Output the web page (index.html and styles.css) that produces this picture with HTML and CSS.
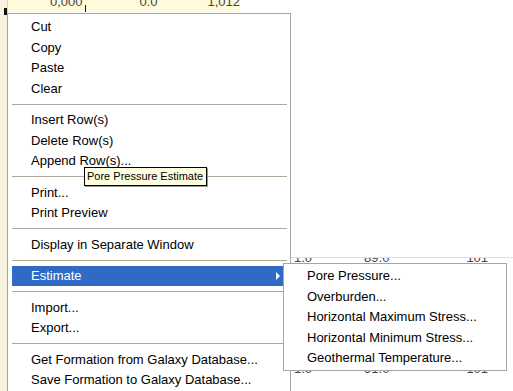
FILE: index.html
```html
<!DOCTYPE html>
<html lang="en">
<head>
  <meta charset="UTF-8" />
  <title>Context Menu</title>
  <link rel="stylesheet" href="styles.css">
</head>
<body>
  <div class="screen">
    <div class="gutter"><span class="mark"></span></div>

    <div class="sheet">
      <div class="toprow">
        <span class="cell t1">0,000</span>
        <span class="caret"></span>
        <span class="cell t2">0.0</span>
        <span class="cell t3">1,012</span>
      </div>
      <div class="gridrow r1">
        <span class="cell g1">1.0</span>
        <span class="cell g2">89.0</span>
        <span class="cell g3">101</span>
      </div>
      <div class="gridrow r2">
        <span class="cell g1">1.0</span>
        <span class="cell g2">91.0</span>
        <span class="cell g3">101</span>
      </div>
    </div>

    <div class="menu main-menu">
      <div class="item">Cut</div>
      <div class="item">Copy</div>
      <div class="item">Paste</div>
      <div class="item">Clear</div>
      <div class="sep"></div>
      <div class="item">Insert Row(s)</div>
      <div class="item">Delete Row(s)</div>
      <div class="item">Append Row(s)...</div>
      <div class="sep"></div>
      <div class="item">Print...</div>
      <div class="item">Print Preview</div>
      <div class="sep"></div>
      <div class="item">Display in Separate Window</div>
      <div class="sep"></div>
      <div class="item active">Estimate<span class="arrow"></span></div>
      <div class="sep"></div>
      <div class="item">Import...</div>
      <div class="item">Export...</div>
      <div class="sep"></div>
      <div class="item">Get Formation from Galaxy Database...</div>
      <div class="item">Save Formation to Galaxy Database...</div>
    </div>

    <div class="menu sub-menu">
      <div class="item">Pore Pressure...</div>
      <div class="item">Overburden...</div>
      <div class="item">Horizontal Maximum Stress...</div>
      <div class="item">Horizontal Minimum Stress...</div>
      <div class="item">Geothermal Temperature...</div>
    </div>

    <div class="tooltip">Pore Pressure Estimate</div>
  </div>
</body>
</html>
```

FILE: styles.css
```css
body {
  margin: 0;
  font-family: "Liberation Sans", Arial, sans-serif;
  font-size: 13px;
  color: #000;
  background: #fff;
}

.screen {
  position: relative;
  width: 513px;
  height: 391px;
  overflow: hidden;
  display: flex;
  background: #fff;
}

.gutter {
  width: 7px;
  background: #f7f3df;
  border-right: 1px solid #d9d5c4;
}

.mark {
  display: block;
  width: 3px;
  height: 7px;
  margin: 8px 0 0 4px;
  background: #111;
}

.sheet {
  flex: 1;
  display: flex;
  flex-direction: column;
}

/* partly scrolled-off row above the menu */
.toprow {
  display: flex;
  align-items: flex-start;
  width: 232px;
  height: 12px;
  overflow: hidden;
  background: #fffbdc;
  color: #444;
  line-height: 12px;
}

.toprow .cell {
  margin-top: -4px;
}

.t1 { margin-left: 42px; }

.caret {
  width: 3px;
  height: 8px;
  margin: 5px 0 0 2px;
  background: #111;
}

.t2 { margin-left: 54px; }
.t3 { margin-left: 50px; }

/* slivers of grid rows peeking round the submenu */
.gridrow {
  display: flex;
  align-items: flex-start;
  height: 5px;
  overflow: hidden;
  color: #444;
  line-height: 15px;
}

.r1 {
  margin-top: 245px;
  border-top: 1px solid #e0e0e0;
}

.r1 .cell { margin-top: -8px; }

.r2 { margin-top: 107px; }
.r2 .cell { margin-top: -9px; }

.g1 { margin-left: 286px; }
.g2 { margin-left: 52px; }
.g3 { margin-left: 77px; }

.menu {
  position: absolute;
  background: #fff;
  border: 1px solid #a5a5a5;
}

.main-menu {
  left: 7px;
  top: 13px;
  width: 273px;
  height: 400px;
  padding: 2.5px 5px 0 4px;
}

.sub-menu {
  left: 283px;
  top: 263px;
  width: 214px;
  padding: 1.5px 4px 2px 4px;
}

.item {
  display: flex;
  align-items: center;
  height: 20.5px;
  padding-left: 19px;
  white-space: nowrap;
}

.item.active {
  background: #316ac5;
  color: #fff;
}

.arrow {
  margin-left: auto;
  margin-right: 5px;
  width: 0;
  height: 0;
  border-top: 4px solid transparent;
  border-bottom: 4px solid transparent;
  border-left: 4px solid #fff;
}

.sep {
  height: 1px;
  margin: 5px -2px 5px 0;
  background: #aca899;
}

.tooltip {
  position: absolute;
  left: 84px;
  top: 167px;
  height: 17px;
  padding: 0 3px 0 2px;
  border: 1px solid #000;
  background: #ffffe1;
  font-size: 11px;
  line-height: 17px;
  white-space: nowrap;
  box-shadow: 1px 1px 0 #999;
}
```
